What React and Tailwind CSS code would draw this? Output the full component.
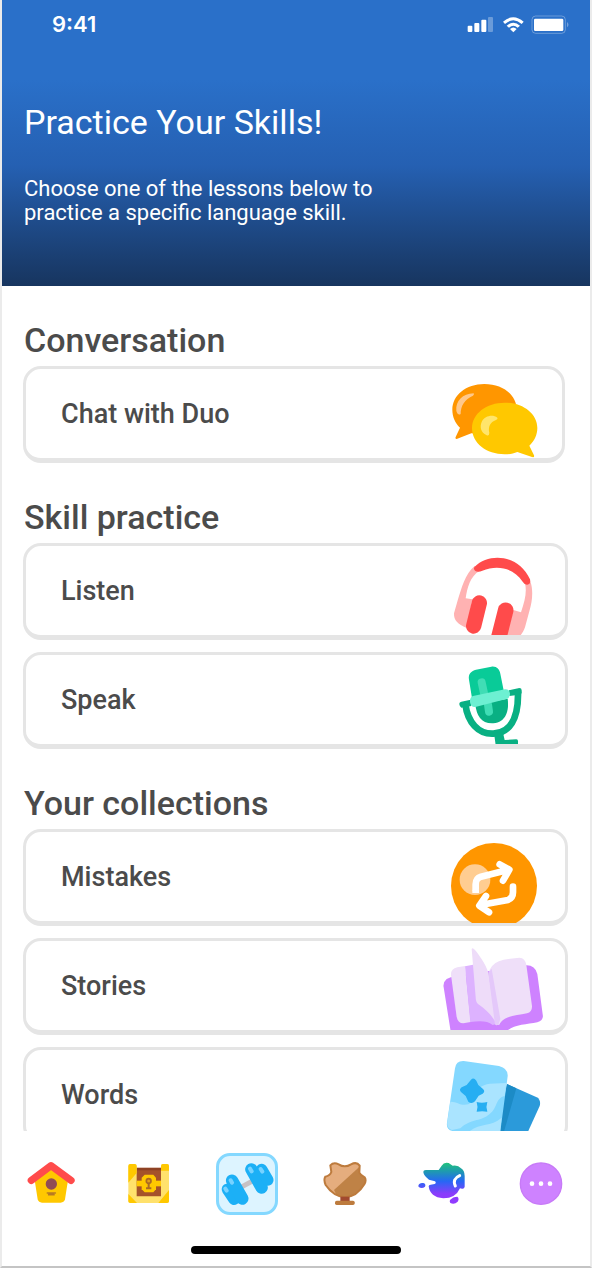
import React from "react";

function StatusIcons() {
  return (
    <svg className="h-[19px] w-[102px]" viewBox="80 45 306 57" role="img" aria-label="Signal, Wi-Fi and battery">
      <g fill="#fff">
        <rect x="82" y="77" width="14" height="19" rx="3" />
        <rect x="102" y="69" width="15" height="27" rx="3" />
        <rect x="123" y="59" width="15" height="37" rx="3" />
        <rect x="143" y="51" width="15" height="45" rx="3" opacity=".3" />
        <path d="M188 65 Q219 38 250 65 L244 72 Q219 50 194 72 Z" />
        <path d="M199 77 Q219 59 239 77 L232 83 Q219 72 206 83 Z" />
        <path d="M209 87 Q219 78 229 87 L219 97 Z" />
        <rect x="281" y="56" width="88" height="37" rx="4" />
        <path d="M381 66 q6 8 0 16 Z" opacity=".5" />
      </g>
      <rect x="275" y="48" width="100" height="52" rx="11" fill="none" stroke="#fff" strokeOpacity=".3" strokeWidth="3" />
    </svg>
  );
}

const artClass = "ml-auto mr-[15px] w-[110px] shrink-0 self-end";

function ChatArt() {
  return (
    <svg className={`${artClass} h-[89px]`} viewBox="21 27 330 267" aria-hidden="true">
      <path d="M163 72 C219 72 260 105 260 148 C260 190 218 222 163 222 C150 222 132 221 124 220 L80 237 Q75 237 77 231 L90 203 C76 190 67 170 67 149 C67 106 108 72 163 72 Z" fill="#ff9600" />
      <path d="M131 100 C98 101 76 123 79 153 Q84 168 92 162 C92 136 104 119 129 107 Q134 103 131 100 Z" fill="#ffc88a" />
      <path d="M224 128 C278 128 322 160 322 204 C322 224 314 242 298 257 L312 286 Q314 293 306 291 L262 276 C250 281 238 283 224 283 C169 283 126 249 126 205 C126 161 169 128 224 128 Z" fill="#ffc800" />
      <path d="M202 173 C188 162 164 168 156 184 C148 200 152 218 170 226 Q178 229 178 218 C174 202 180 186 198 180 Q205 177 202 173 Z" fill="#ffe56b" />
    </svg>
  );
}

function ListenArt() {
  return (
    <svg className={`${artClass} h-[89px]`} viewBox="30 20 330 267" aria-hidden="true">
      <path d="M134 80 C105 102 94 150 84 180 L72 222 C71 244 83 254 110 266 L127 180 L107 177 C112 145 120 112 148 95 Z" fill="#ffb2b2" />
      <path d="M301 126 C311 156 306 188 299 212 L285 264 C281 276 276 283 270 290 H230 L250 212 L273 219 C285 184 291 158 285 132 Z" fill="#ffb2b2" />
      <path d="M134 82 C178 39 265 45 300 120 Q303 134 292 136 Q284 137 278 127 C252 87 204 75 157 94 Q144 100 135 94 Q129 88 134 82 Z" fill="#ff4b4b" />
      <path d="M148 191 L131 260" stroke="#ff4b4b" strokeWidth="46" strokeLinecap="round" />
      <path d="M227 213 L205 300" stroke="#ff4b4b" strokeWidth="47" strokeLinecap="round" />
    </svg>
  );
}

function SpeakArt() {
  return (
    <svg className={`${artClass} h-[89px]`} viewBox="30 346 330 267" aria-hidden="true">
      <path d="M106 493 C113 548 145 584 190 582 C238 580 266 540 264 456" fill="none" stroke="#09b083" strokeWidth="20" />
      <path d="M88 494 Q87 488 94 486 L122 480 L124 499 L94 504 Q89 502 88 494 Z M237 452 L268 445 Q275 445 275 452 V459 Q275 464 268 465 L238 469 Z" fill="#09b083" />
      <path d="M192 580 L219 579 L224 601 L259 599 Q265 599 264 607 V616 H197 Z" fill="#09b083" />
      <path d="M117 420 C114 402 124 394 138 390 L184 381 C200 379 208 388 211 402 L223 462 L127 482 Z" fill="#09cb98" />
      <path d="M136 495 L233 477 C238 515 227 547 190 551 C154 553 140 528 136 495 Z" fill="#09b083" />
      <path d="M155 428 L164 470 M174 495 L177 516" stroke="#40ddb5" strokeWidth="24" strokeLinecap="round" />
      <path d="M129 469 L225 449 Q238 448 240 462 Q240 475 229 478 L136 502 Q123 504 120 487 Q119 473 129 469 Z" fill="#6df0d2" />
    </svg>
  );
}

function MistakesArt() {
  return (
    <svg className={`${artClass} -mb-0.5 h-[91px]`} viewBox="30 24 330 273" aria-hidden="true">
      <circle cx="192" cy="186" r="129" fill="#ff9600" />
      <circle cx="135" cy="167" r="46" fill="#ffcd91" />
      <g fill="none" stroke="#fff" strokeWidth="20" strokeLinecap="round" strokeLinejoin="round">
        <path d="M137 196 V181 Q137 163 153 158 L233 138 M209 121 L238 137 L219 170" />
        <path d="M249 188 V205 Q249 222 234 228 L151 243 M168 216 L148 245 L177 265" />
      </g>
      <path d="M127 197 h20 v10 h-20 Z" fill="#fff" />
    </svg>
  );
}

function StoriesArt() {
  return (
    <svg className={`${artClass} h-[89px]`} viewBox="30 19 330 267" aria-hidden="true">
      <path d="M64 127 L50 133 Q38 143 41 158 L62 290 H230 C248 271 290 269 322 263 Q342 258 338 239 L322 118 Q315 91 288 92 Z" fill="#ce82ff" />
      <path d="M63 121 Q62 102 82 98 L105 94 L122 262 L100 266 Q84 266 80 247 Z" fill="#efdff9" />
      <path d="M105 95 L137 89 L174 205 L198 268 L188 271 C172 257 148 258 121 262 Z" fill="#ddb2ff" />
      <path d="M125 43 Q128 36 137 48 C156 72 172 99 176 118 L198 265 C187 244 169 225 144 208 Q137 202 137 188 Z" fill="#eedcf9" />
      <path d="M179 105 Q190 81 221 75 L268 69 Q286 70 289 91 L306 214 Q307 231 291 236 C256 243 219 244 208 270 L198 272 L176 122 Z" fill="#efdff9" />
      <path d="M175 114 L185 102 L211 253 L205 271 L195 270 Z" fill="#e4c8fa" />
    </svg>
  );
}

function WordsArt() {
  return (
    <svg className={`${artClass} h-[89px]`} viewBox="30 345 330 267" aria-hidden="true">
      <path d="M231 447 L320 487 Q334 495 329 513 L284 612 H190 Z" fill="#2b9ada" />
      <path d="M231 447 L259 460 L222 590 V612 H200 Z" fill="#1c8bc6" />
      <path d="M75 400 Q78 377 101 378 L207 393 Q235 400 233 424 L208 612 H100 L67 588 Q48 584 51 563 Z" fill="#84d8ff" />
      <path d="M61 500 C82 499 91 514 115 508 C146 490 124 454 180 446 L229 444 L224 483 C193 491 206 520 174 541 C147 561 125 550 91 580 L66 585 Q49 579 52 561 Z M117 590 C150 562 181 577 215 548 L208 612 H117 Z" fill="#aae4ff" />
      <path d="M123 434 Q131 426 139 437 L145 450 L159 462 Q167 469 158 476 L146 482 L135 499 Q125 509 115 500 L107 483 L93 471 Q86 464 95 457 L110 450 Z" fill="#26aef2" />
      <path d="M140 501 Q155 505 172 501 Q167 515 172 530 Q157 527 140 530 Q145 516 140 501 Z" fill="#26aef2" />
    </svg>
  );
}

function HomeIcon() {
  return (
    <svg className="size-[50px]" viewBox="76 87 150 150" aria-hidden="true">
      <path d="M102 151 L152 115 L202 151 L193 208 Q190 218 180 218 H124 Q114 218 111 208 Z" fill="#ffc800" />
      <path d="M92 151 L151 107 L211 151" fill="none" stroke="#ff4b4b" strokeWidth="22" strokeLinecap="round" strokeLinejoin="round" />
      <circle cx="152" cy="162" r="17" fill="#914d55" />
      <path d="M140 189 h24 M144 194 h16" stroke="#b77a23" strokeWidth="5" strokeLinecap="round" />
    </svg>
  );
}

function ChestIcon() {
  return (
    <svg className="size-[50px]" viewBox="372 87 150 150" aria-hidden="true">
      <rect x="405" y="113" width="82" height="90" fill="#a5522a" />
      <path d="M410 114 H483 V121 H410 Z" fill="#8e4224" />
      <path d="M385 108 Q385 102 391 102 H404 Q410 102 410 108 V199 H483 V108 Q483 102 489 102 H501 Q507 102 507 108 V214 Q507 219 501 219 H391 Q385 219 385 214 Z" fill="#ffe16c" />
      <path d="M385 108 Q385 102 391 102 H404 Q410 102 410 108 V129 L385 158 Z M483 108 Q483 102 489 102 H501 Q507 102 507 108 V122 H483 Z M385 192 L411 219 H391 Q385 219 385 214 Z M507 180 V214 Q507 219 501 219 H475 Z" fill="#ffc800" />
      <path d="M410 152 H483 V169 H410 Z" fill="#ffc800" />
      <path d="M434 134 H460 L468 143 V178 L460 187 H434 L425 178 V143 Z" fill="#ffc800" />
      <circle cx="446" cy="153" r="7" fill="#e09d1c" stroke="#aa6924" strokeWidth="5" />
      <path d="M446 158 V174 M438 175 H454" fill="none" stroke="#aa6924" strokeWidth="6" />
    </svg>
  );
}

function DumbbellIcon() {
  return (
    <svg className="size-[56px]" viewBox="656 76 168 168" aria-hidden="true">
      <path d="M720 171 L760 149" stroke="#c6c1c4" strokeWidth="15" />
      <path d="M681 176 L694 149 L726 205 L704 206 Z M752 115 L782 116 L802 151 L786 171 Z" fill="#1cb0f6" />
      <g fill="none" stroke="#1cb0f6" strokeLinecap="round">
        <path d="M681 176 L701 206" strokeWidth="34" />
        <path d="M695 150 L726 204" strokeWidth="37" />
        <path d="M753 116 L784 171" strokeWidth="37" />
        <path d="M784 117 L802 148" strokeWidth="35" />
      </g>
      <g fill="none" stroke="#77d2ff" strokeWidth="12" strokeLinecap="round">
        <path d="M675 174 l4 6 M691 149 l4 7 M749 114 l5 8 M781 115 l5 8" />
      </g>
    </svg>
  );
}

function LeagueIcon() {
  return (
    <svg className="size-[50px]" viewBox="73 87 150 150" aria-hidden="true">
      <clipPath id="crest">
        <path d="M104 106 Q114 95 129 103 Q147 115 166 103 Q183 94 192 107 L191 128 Q195 136 207 142 Q213 151 206 163 Q184 200 148 202 Q113 199 90 165 Q83 149 89 140 Q103 137 107 126 Z" />
      </clipPath>
      <g clipPath="url(#crest)">
        <rect x="80" y="92" width="136" height="115" fill="#e5ad7e" />
        <path d="M115 180 L194 108 L220 120 V210 H130 Z" fill="#bf8246" />
      </g>
      <path d="M104 106 Q114 95 129 103 Q147 115 166 103 Q183 94 192 107 L191 128 Q195 136 207 142 Q213 151 206 163 Q184 200 148 202 Q113 199 90 165 Q83 149 89 140 Q103 137 107 126 Z" fill="none" stroke="#bd7b3d" strokeWidth="6" />
      <path d="M134 200 H162 V215 H134 Z" fill="#a1492f" />
      <rect x="118" y="212" width="59" height="13" rx="5" fill="#bd7b3d" />
    </svg>
  );
}

function CharacterIcon() {
  return (
    <svg className="size-[50px]" viewBox="370 87 150 150" aria-hidden="true">
      <linearGradient id="splash" x1="0" y1="98" x2="0" y2="222" gradientUnits="userSpaceOnUse">
        <stop offset="0" stopColor="#20c37b" />
        <stop offset=".2" stopColor="#1e9cad" />
        <stop offset=".45" stopColor="#2667f5" />
        <stop offset=".75" stopColor="#8a3dfb" />
        <stop offset="1" stopColor="#923bff" />
      </linearGradient>
      <g fill="url(#splash)">
        <path d="M386 127 Q386 119 396 120 L432 120 L441 107 Q448 95 462 99 L474 107 Q490 104 499 115 Q510 122 510 138 V170 Q509 177 502 176 L496 175 Q483 205 446 205 Q406 202 402 169 Q402 164 408 164 L420 162 Q426 159 421 154 L403 149 Q388 139 386 127 Z" />
        <path d="M371 167 Q374 157 386 159 Q395 162 391 170 Q382 178 372 171 Z M466 210 Q475 200 488 200 Q495 206 489 215 Q479 225 467 219 Q464 215 466 210 Z" />
      </g>
      <path d="M495 137 Q472 147 482 168" fill="none" stroke="#fff" strokeWidth="9" strokeLinecap="round" />
    </svg>
  );
}

function MoreIcon() {
  return (
    <svg className="size-[50px]" viewBox="659 87 150 150" aria-hidden="true">
      <circle cx="734" cy="161" r="62" fill="#ce82ff" stroke="#c77af7" strokeWidth="4" />
      <g fill="#fff">
        <circle cx="707" cy="161" r="7" />
        <circle cx="734" cy="161" r="7" />
        <circle cx="761" cy="161" r="7" />
      </g>
    </svg>
  );
}

const sections = [
  { title: "Conversation", inset: true, lessons: [["Chat with Duo", ChatArt]] },
  { title: "Skill practice", lessons: [["Listen", ListenArt], ["Speak", SpeakArt]] },
  { title: "Your collections", lessons: [["Mistakes", MistakesArt], ["Stories", StoriesArt], ["Words", WordsArt]] },
];

const tabs = [
  ["Home", HomeIcon],
  ["Quests", ChestIcon],
  ["Practice", DumbbellIcon],
  ["Leagues", LeagueIcon],
  ["Characters", CharacterIcon],
  ["More", MoreIcon],
];

function LessonCard({ label, Art }) {
  return (
    <button
      type="button"
      className="flex h-[97px] w-full items-center rounded-[18px] border-[3px] border-b-[5px] border-[#e5e5e5] bg-white pl-[35px] text-left text-[27px] leading-8 font-medium text-[#4b4b4b]"
    >
      <span>{label}</span>
      <Art />
    </button>
  );
}

export default function App() {
  return (
    <div className="flex h-screen flex-col border-x-2 border-b-2 border-x-[#ebebeb] border-b-[#c4c4c4] bg-white font-['Roboto',sans-serif] text-[#4b4b4b]">
      <header className="shrink-0 bg-linear-to-b from-[#2a70c9] from-28% via-[#2560b2] via-58% to-[#17355f] pb-[61px] text-white">
        <div className="flex h-12 items-center justify-between pr-[21px] pl-[50px]">
          <span className="font-['Inter',sans-serif] text-[22px] leading-6 font-semibold">9:41</span>
          <StatusIcons />
        </div>
        <div className="px-[22px] pt-[54px]">
          <h1 className="text-[34px] leading-10 font-normal">Practice Your Skills!</h1>
          <p className="mt-[35px] max-w-[400px] text-[22px] leading-6">
            Choose one of the lessons below to practice a specific language skill.
          </p>
        </div>
      </header>

      <main className="flex min-h-0 flex-1 flex-col gap-[34px] overflow-y-auto pt-[34px] pr-[22px] pl-[21px] [scrollbar-width:none]">
        {sections.map(({ title, inset, lessons }) => (
          <section key={title} className={inset ? "pr-[3px]" : ""}>
            <h2 className="mb-1.5 pl-px text-[34px] leading-10 font-medium">{title}</h2>
            <div className="flex flex-col gap-3">
              {lessons.map(([label, Art]) => (
                <LessonCard key={label} label={label} Art={Art} />
              ))}
            </div>
          </section>
        ))}
      </main>

      <footer className="shrink-0 bg-white pt-[22px] pb-3">
        <nav className="grid grid-cols-6 items-center justify-items-center" aria-label="Main">
          {tabs.map(([label, Icon]) => (
            <a
              key={label}
              href="#"
              aria-label={label}
              aria-current={label === "Practice" ? "page" : undefined}
              className={
                label === "Practice"
                  ? "flex size-[62px] items-center justify-center rounded-[14px] border-[3px] border-[#84d8ff] bg-[#ddf4ff]"
                  : "flex size-[62px] items-center justify-center"
              }
            >
              <Icon />
            </a>
          ))}
        </nav>
        <div className="mx-auto mt-[31px] h-2 w-[210px] rounded-full bg-black" />
      </footer>
    </div>
  );
}
